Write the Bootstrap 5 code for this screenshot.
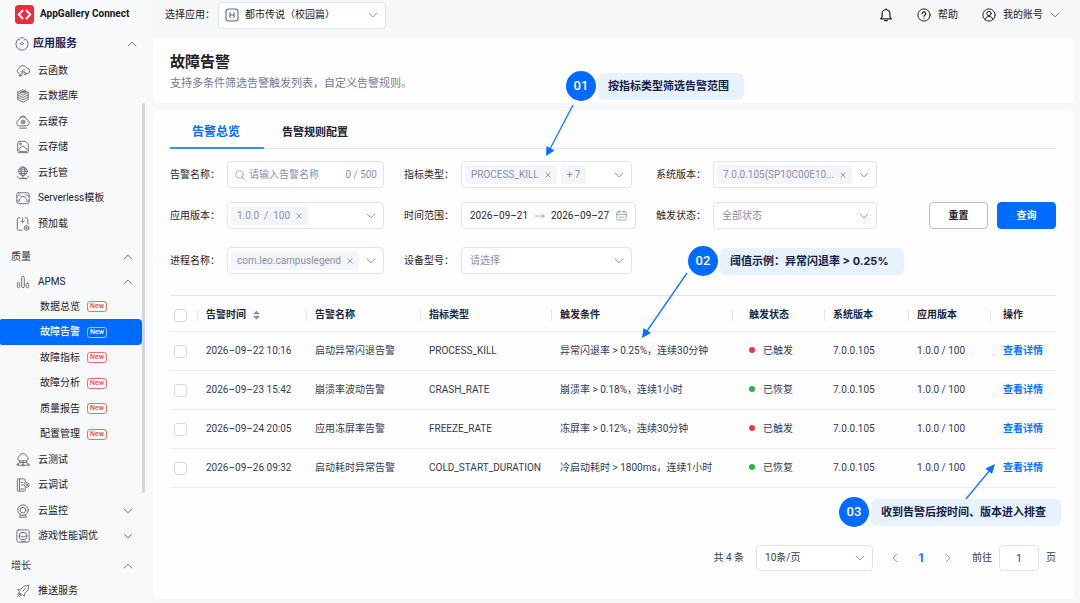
<!DOCTYPE html>
<html lang="zh-CN">
<head>
<meta charset="utf-8">
<meta name="viewport" content="width=device-width, initial-scale=1">
<title>故障告警 - AppGallery Connect</title>
<link href="https://cdn.jsdelivr.net/npm/bootstrap@5.3.0/dist/css/bootstrap.min.css" rel="stylesheet">
<style>
:root{--brand:#006cff;--ink:#1d2129;--cell:#333a55;--muted:#8a8fa8;--line:#dfe3ee;
--chev:url("data:image/svg+xml,%3Csvg xmlns='http://www.w3.org/2000/svg' viewBox='0 0 16 16' fill='none' stroke='%238a8fa8' stroke-width='1.6' stroke-linecap='round' stroke-linejoin='round'%3E%3Cpath d='M2 5l6 6 6-6'/%3E%3C/svg%3E")}
body{font-family:Roboto,"Noto Sans CJK SC",sans-serif;font-size:10px;line-height:16px;color:var(--ink);background:#f5f7f8}
svg.ico{width:14px;height:14px;fill:none;stroke:currentColor;stroke-width:1.1;stroke-linecap:round;stroke-linejoin:round;flex:none}
svg.chevron{width:10px;height:10px;stroke-width:1.6;color:#6a6f85}
a{color:inherit;text-decoration:none}
/* sidebar */
.side{width:153px;flex:none;background:#f7f9fa;padding-right:11px}
.brand-row{height:28px;padding-left:15px;gap:6px;font-size:10px;font-weight:700;color:#15171c}
.brand-row svg{width:19px;height:19px;flex:none}
.side ul{list-style:none;margin:0;padding:0}
.side li,.group-head{height:25px;display:flex;align-items:center}
.side li:nth-child(even){height:26px}
.side li>a{flex:1;height:100%;display:flex;align-items:center;gap:8px;padding:0 9px 0 16px}
.side li>a svg.ico:first-child{color:#6d7078}
.side .chevron{margin-left:auto}
.group-head{width:100%;border:0;background:none;padding:0 9px 0 11px;color:#33363d}
.group-head.top-group{height:30px;padding:1px 5px 0 15px;gap:4px;font-size:11px;font-weight:700;color:#1b2559}
.top-group svg.ico:first-child{color:#5d6590}
.side .sub-list a{padding-left:40px;gap:7px}
.side .sub-list a.active{background:var(--brand);color:#fff;border-radius:2px 4px 4px 2px;font-weight:500}
.new-tag{border:1px solid #f56a6e;color:#f3484e;border-radius:3px;font-size:7px;line-height:9px;width:20px;text-align:center;font-weight:500}
.active .new-tag{border-color:#9cc6ff;color:#fff}
.side-scroll{position:absolute;left:142px;top:103px;width:3px;height:390px;border-radius:2px;background:#d3d5da}
/* top bar */
.topbar{height:30px;padding:0 20px 0 12px}
.topbar button{border:0;background:none;padding:0;color:inherit;display:flex;align-items:center;gap:7px}
.app-pick .form-select{width:168px;padding-left:26px;color:var(--ink)}
.app-pick svg{position:absolute;left:7px;top:6px;color:#62667d}
/* panels */
.panel{background:#fefefe;border-radius:5px}
h1{font-size:15px;line-height:22px;font-weight:700;margin:0}
.lead-text{font-size:11px;color:#747a94}
.tab-bar{border-bottom:1px solid var(--line);height:38px}
.tab-bar .nav-link{font-size:11px;font-weight:700;color:var(--ink);padding:4px 18px 0;line-height:35px;border-bottom:2px solid transparent;height:38px}
.tab-bar .nav-link.active{font-size:12px;color:var(--brand);padding:4px 24px 0 22px;border-color:#3b8dff}
/* filters */
.filters{display:grid;grid-template-columns:214fr 232fr 221fr 159fr;column-gap:20px;row-gap:14px;margin-top:12px}
.field{display:flex;align-items:center;position:relative;min-width:0}
.field>label,.field>.caption-text{width:57px;flex:none;color:#24262d}
.ctl,.form-select,.ctl-box{height:27px;border:1px solid var(--line);border-radius:4px;background-color:#fff;font-size:10px;line-height:16px;color:var(--cell)}
.ctl-box{flex:1;min-width:0;display:flex;align-items:center;padding:0 7px 0 3px;color:var(--muted)}
.ctl-box svg.chevron{color:var(--muted)}
.form-select{--bs-form-select-bg-img:var(--chev);padding:0 24px 0 8px;background-size:10px;background-position:right 7px center}
.form-select.empty{color:var(--muted)}
.ctl-box input{border:0;outline:0;background:none;padding:0;min-width:0;color:inherit}
.ctl-box input::placeholder{color:var(--muted)}
.chip{background:#f4f5f8;border-radius:3px;height:19px;display:flex;align-items:center;padding:0 6px;gap:6px;white-space:nowrap}
.chip button,.ctl-box>button{border:0;background:none;padding:0;color:inherit;display:flex}
.chip svg.ico{width:6px;height:6px;stroke-width:2.400}
.btn-act{width:59px;height:27px;border-radius:4px;font-size:10px;font-weight:700;padding:0;line-height:16px}
.btn-reset{border:1px solid #b9bccb;background:#fff;color:var(--ink)}
.btn-query{border:1px solid var(--brand);background:var(--brand);color:#fff}
.btn-query:hover{background:#005be0;color:#fff}
/* table */
.alarms{table-layout:fixed;margin:21px 0 0;border-top:1px solid var(--line);color:var(--cell);--bs-table-bg:transparent;--bs-table-color:var(--cell)}
.alarms>thead>tr>th{height:36px;padding:3px 0 0 9px;font-weight:700;color:#20263d;vertical-align:middle;border-color:#e8ebf3;white-space:nowrap;position:relative}
.alarms>thead>tr>th+th::before{content:"";position:absolute;left:0;top:14px;width:1px;height:11px;background:#e4e7f0}
.alarms>tbody>tr>td{height:39px;padding:0 0 0 9px;vertical-align:middle;border-color:#e8ebf3;white-space:nowrap;position:relative}
.alarms>*>tr>*:first-child{padding-left:4px}
.alarms>*>tr>*:nth-child(6){padding-left:17px}
.alarms>*>tr>*:nth-child(9){padding-left:13px}
.alarms .form-check-input{width:13px;height:13px;margin:0;border:1px solid #d5daea;border-radius:3px;display:block}
.alarms td a{color:#0a75ff;font-weight:700}
.dot-mark{width:6px;height:6px;border-radius:50%;display:inline-block;margin-right:8px;vertical-align:1px}
.is-on{background:#f9333d}.is-off{background:#23b83a}
/* callouts lying over the page */
.tip{position:absolute;display:flex;align-items:center;gap:2px;z-index:5;white-space:nowrap;pointer-events:none}
.tip-no{width:30px;height:30px;border-radius:50%;background:var(--brand);color:#fff;font-size:13px;font-weight:500;display:flex;align-items:center;justify-content:center}
.tip-text{background:#e8f1fe;border-radius:6px;height:27px;line-height:27px;padding:0 15px 0 10px;font-family:Inter,"Noto Sans CJK SC",sans-serif;font-size:11px;font-weight:700;color:#141d45}
.tip-arrow{position:absolute;overflow:visible;stroke:#1a7bff;fill:#0a6fff;stroke-width:1.4}
.tip-arrow .head{stroke:none}
.tip-1{left:162px;top:-90px}.tip-1 .tip-arrow{left:-20px;top:34px}
.tip-2{left:137px;top:-86px}.tip-2 .tip-arrow{left:-46px;top:27px}
.tip-3{right:-5px;top:48px}.tip-3 .tip-arrow{right:66px;top:-33px}
/* pager */
.pager{color:var(--cell);margin-top:57px}
.pager .form-select{width:117px;height:26px}
.pager .ctl{width:40px;height:26px;text-align:center}
.pager button{border:0;background:none;padding:0;color:#8f94aa;display:flex}
.pager svg.chevron{color:#8f94aa}
</style>
</head>
<body>
<svg class="d-none">
 <symbol id="down" viewBox="0 0 16 16"><path d="M2 5l6 6 6-6"/></symbol>
 <symbol id="up" viewBox="0 0 16 16"><path d="M2 11l6-6 6 6"/></symbol>
 <symbol id="left" viewBox="0 0 16 16"><path d="M11 2L5 8l6 6"/></symbol>
 <symbol id="right" viewBox="0 0 16 16"><path d="M5 2l6 6-6 6"/></symbol>
 <symbol id="x" viewBox="0 0 16 16"><path d="M2 2l12 12M14 2L2 14"/></symbol>
</svg>
<div class="d-flex min-vh-100">
 <nav class="side position-relative" aria-label="主导航">
  <div class="brand-row d-flex align-items-center">
   <svg viewBox="0 0 19 19"><rect width="19" height="19" rx="3.5" fill="#ee2b3c"/><path d="M8 5L3.8 9.5 8 14M11 5l4.200 4.500L11 14" fill="none" stroke="#fff" stroke-width="2"/></svg>
   <span>AppGallery Connect</span>
  </div>
  <button class="group-head top-group"><svg class="ico" viewBox="0 0 16 16"><path d="M4 2.300a7 7 0 1 0 8 0M4 2.300l1.500 1.200M12 2.300l-1.500 1.200M6.500 1h3M6 7l2 2 2-2M8 6v1"/></svg>应用服务<svg class="ico chevron"><use href="#up"/></svg></button>
  <ul>
   <li><a href="#"><svg class="ico" viewBox="0 0 16 16"><path d="M3.500 11A3 3 0 0 1 3 5.500 5 5 0 0 1 12.500 5a3 3 0 0 1 .5 6H12M9.500 6.500C7 5.500 7.500 9 7 11.500S5 15 4.500 13M5.500 9h4"/><circle cx="10.500" cy="11" r="1.300"/><circle cx="4.500" cy="13" r="1"/></svg>云函数</a></li>
   <li><a href="#"><svg class="ico" viewBox="0 0 16 16"><path d="M8 1l6 3-6 3-6-3zM2 4v8l6 3 6-3V4M2 6.700l6 3 6-3M2 9.400l6 3 6-3M5 4h6M6 2.800h4"/></svg>云数据库</a></li>
   <li><a href="#"><svg class="ico" viewBox="0 0 16 16"><path d="M4 12.500A3.500 3.500 0 0 1 3.200 5.700 5 5 0 0 1 12.800 5.700 3.500 3.500 0 0 1 12 12.500zM4 15h8M5 2.500L8 1l3 1.500"/><circle cx="8" cy="8" r="2.200"/><circle cx="8" cy="8" r=".5"/></svg>云缓存</a></li>
   <li><a href="#"><svg class="ico" viewBox="0 0 16 16"><path d="M4 1.500h6.500l3.500 3V13a1.500 1.500 0 0 1-1.500 1.500h-9A1.500 1.500 0 0 1 2 13V3.500a2 2 0 0 1 2-2zM4 13a2.300 2.300 0 0 1 1-4 3 3 0 0 1 5.500 0A2.300 2.300 0 0 1 12 13z"/><circle cx="5" cy="4.500" r="1"/></svg>云存储</a></li>
   <li><a href="#"><svg class="ico" viewBox="0 0 16 16"><circle cx="8" cy="6" r="5"/><ellipse cx="8" cy="6" rx="2.200" ry="5"/><path d="M3 6h10M4 3.500h8M4 8.500h8M8 11v3M1.500 12l2 2.500h9l2-2.500M5 14h6"/></svg>云托管</a></li>
   <li><a href="#"><svg class="ico" viewBox="0 0 16 16"><rect x="1" y="2" width="14" height="12.500" rx="2"/><path d="M1 6c2 0 2-1.500 4-1.500M15 6c-2 0-2-1.500-4-1.500M4.500 12a2 2 0 0 1 .3-3.500 3.300 3.300 0 0 1 6.400 0A2 2 0 0 1 11.500 12M1 11l2 1M15 11l-2 1"/></svg>Serverless模板</a></li>
   <li><a href="#"><svg class="ico" viewBox="0 0 16 16"><path d="M4.500 1H3a1.500 1.500 0 0 0-1.500 1.500v11A1.500 1.500 0 0 0 3 15h4M10.500 1H12a1.500 1.500 0 0 1 1.500 1.500V8M7.500 1v5M5.500 4.500l2 2 2-2"/><circle cx="12" cy="12.500" r="2.700"/><path d="M11 12.500h2M12 11.500v2"/></svg>预加载</a></li>
  </ul>
  <button class="group-head mt-2">质量<svg class="ico chevron"><use href="#up"/></svg></button>
  <ul>
   <li><a href="#"><svg class="ico" viewBox="0 0 16 16"><rect x="1.500" y="8.500" width="2.800" height="6" rx="1.400"/><rect x="6.500" y="1.500" width="3" height="13" rx="1.500"/><rect x="11.700" y="9.500" width="2.800" height="5" rx="1.400"/></svg>APMS<svg class="ico chevron"><use href="#up"/></svg></a></li>
  </ul>
  <ul class="sub-list">
   <li><a href="#">数据总览<span class="new-tag">New</span></a></li>
   <li><a href="#" class="active" aria-current="page">故障告警<span class="new-tag">New</span></a></li>
   <li><a href="#">故障指标<span class="new-tag">New</span></a></li>
   <li><a href="#">故障分析<span class="new-tag">New</span></a></li>
   <li><a href="#">质量报告<span class="new-tag">New</span></a></li>
   <li><a href="#">配置管理<span class="new-tag">New</span></a></li>
  </ul>
  <ul>
   <li><a href="#"><svg class="ico" viewBox="0 0 16 16"><path d="M4 9A2.700 2.700 0 0 1 3.500 4 4.700 4.700 0 0 1 12.500 4 2.700 2.700 0 0 1 12 9zM8 9v4M4 9v2l-2 1.500M12 9v2l2 1.500M4 11h8"/><circle cx="2" cy="13.500" r="1"/><circle cx="8" cy="14" r="1"/><circle cx="14" cy="13.500" r="1"/><path d="M4.500 14h2M9.500 14h2"/></svg>云测试</a></li>
   <li><a href="#"><svg class="ico" viewBox="0 0 16 16"><path d="M10.500 5V2a1 1 0 0 0-1-1h-7a1 1 0 0 0-1 1v12a1 1 0 0 0 1 1h7a1 1 0 0 0 1-1v-3M4 1v14M6 5h2M6 8h2M5.500 12.500h3"/><path d="M11 5.500h2.500L15.300 8l-1.800 2.500H11L9.300 8z"/><circle cx="12.300" cy="8" r=".8"/></svg>云调试</a></li>
   <li><a href="#"><svg class="ico" viewBox="0 0 16 16"><circle cx="8" cy="7" r="6"/><circle cx="8" cy="7" r="3.300"/><path d="M5.500 12.500L4 15h8l-1.500-2.500"/></svg>云监控<svg class="ico chevron"><use href="#down"/></svg></a></li>
   <li><a href="#"><svg class="ico" viewBox="0 0 16 16"><rect x="1" y="1" width="14" height="14" rx="2"/><rect x="4" y="4" width="8" height="8" rx="2.500"/><path d="M3 8h2.500l1 1h3l1-1H13M6 14h5"/></svg>游戏性能调优<svg class="ico chevron"><use href="#down"/></svg></a></li>
  </ul>
  <button class="group-head mt-1">增长<svg class="ico chevron"><use href="#up"/></svg></button>
  <ul>
   <li><a href="#"><svg class="ico" viewBox="0 0 16 16"><path d="M14.500 1.500L9 2.500 5.500 6 2 6.500l2 2-1 2 2 .5.500 2 2-1 2 2 .5-3.500L13.500 7zM5 11l-3.500 3.500M3 10.500l-1.500 1.500M5.500 13L4 14.500M8 8l3-3"/></svg>推送服务</a></li>
  </ul>
  <div class="side-scroll"></div>
 </nav>

 <div class="flex-grow-1 d-flex flex-column pb-1" style="min-width:0">
  <header class="topbar d-flex align-items-center">
   <label for="app">选择应用：</label>
   <div class="app-pick position-relative" style="margin-left:3px">
    <select id="app" class="form-select"><option>都市传说（校园篇）</option></select>
    <svg class="ico" viewBox="0 0 14 14"><rect x="1" y="1" width="12" height="12" rx="2.500"/><path d="M5 4.500v5M9 4.500v5M5 7h4"/></svg>
   </div>
   <div class="ms-auto d-flex align-items-center">
    <button aria-label="通知"><svg class="ico" viewBox="0 0 16 16"><path d="M2 12.500h12L12.500 10V6.500a4.500 4.500 0 0 0-9 0V10zM6.500 14.500h3M8 1v1" stroke-width="1.400"/></svg></button>
    <button class="ms-4"><svg class="ico" viewBox="0 0 16 16"><circle cx="8" cy="8" r="7"/><path d="M6 6.300a2 2 0 1 1 2.800 1.900c-.6.300-.8.600-.8 1.300M8 11.500v.2" stroke-width="1.300"/></svg>帮助</button>
    <button class="ms-4"><svg class="ico" viewBox="0 0 16 16"><circle cx="8" cy="8" r="7"/><circle cx="8" cy="6.300" r="2.500"/><path d="M3.500 13.200a4.600 4.600 0 0 1 9 0"/></svg>我的账号<svg class="ico chevron"><use href="#down"/></svg></button>
   </div>
  </header>
  <main class="d-flex flex-column flex-grow-1 gap-2 mt-2" style="margin-right:6px">
   <section class="panel" style="padding:13px 17px 12px">
    <h1>故障告警</h1>
    <div class="lead-text pt-1 pb-0" style="line-height:14px">支持多条件筛选告警触发列表，自定义告警规则。</div>
   </section>
   <section class="panel flex-grow-1" style="padding:0 18px 28px 17px">
    <nav class="tab-bar nav" aria-label="告警页签">
     <a class="nav-link active" href="#">告警总览</a>
     <a class="nav-link" href="#">告警规则配置</a>
    </nav>
    <form class="filters" onsubmit="return false">
     <div class="field"><label for="nm">告警名称：</label>
      <div class="ctl-box gap-1" style="padding:0 6px 0 7px"><svg class="ico" viewBox="0 0 16 16" style="width:10px;height:10px"><circle cx="7" cy="7" r="6"/><path d="M11.500 11.500L15 15"/></svg><input id="nm" class="flex-grow-1" type="text" placeholder="请输入告警名称" size="8"><span class="text-nowrap">0 / 500</span></div></div>
     <div class="field pe-1"><span class="caption-text">指标类型：</span>
      <div class="ctl-box gap-1"><span class="chip">PROCESS_KILL<button type="button" aria-label="移除"><svg class="ico"><use href="#x"/></svg></button></span><span class="chip">+ 7</span><button type="button" class="ms-auto" aria-label="展开"><svg class="ico chevron"><use href="#down"/></svg></button></div>
      <div class="tip tip-1"><span class="tip-no">01</span><span class="tip-text">按指标类型筛选告警范围</span>
       <svg class="tip-arrow" width="27" height="51"><path d="M27 0L4 44"/><path class="head" d="M0 51l.5-10 8 4.500z"/></svg></div></div>
     <div class="field"><span class="caption-text">系统版本：</span>
      <div class="ctl-box"><span class="chip">7.0.0.105(SP10C00E10...<button type="button" aria-label="移除"><svg class="ico"><use href="#x"/></svg></button></span><button type="button" class="ms-auto" aria-label="展开"><svg class="ico chevron"><use href="#down"/></svg></button></div></div>
     <div></div>
     <div class="field"><span class="caption-text">应用版本：</span>
      <div class="ctl-box"><span class="chip">1.0.0&nbsp; /&nbsp; 100<button type="button" aria-label="移除"><svg class="ico"><use href="#x"/></svg></button></span><button type="button" class="ms-auto" aria-label="展开"><svg class="ico chevron"><use href="#down"/></svg></button></div></div>
     <div class="field"><label for="d1">时间范围：</label>
      <div class="ctl-box px-2 justify-content-between"><input id="d1" style="width:59px;color:#24262d" value="2026–09–21"><svg class="ico" viewBox="0 0 16 16" style="width:10px"><path d="M0 8h15M11 5l4 3-4 3"/></svg><input aria-label="结束日期" style="width:59px;color:#24262d" value="2026–09–27"><svg class="ico" viewBox="0 0 16 16" style="width:11px;height:11px"><rect x="1" y="2.500" width="14" height="12" rx="2"/><path d="M1 6.500h14M4.500 1v3M11.500 1v3M4 10.500h8"/></svg></div></div>
     <div class="field"><label for="st">触发状态：</label><select id="st" class="form-select empty"><option>全部状态</option></select></div>
     <div class="d-flex justify-content-end" style="gap:9px"><button type="reset" class="btn btn-act btn-reset">重置</button><button class="btn btn-act btn-query">查询</button></div>
     <div class="field mt-1"><span class="caption-text">进程名称：</span>
      <div class="ctl-box"><span class="chip">com.leo.campuslegend<button type="button" aria-label="移除"><svg class="ico"><use href="#x"/></svg></button></span><button type="button" class="ms-auto" aria-label="展开"><svg class="ico chevron"><use href="#down"/></svg></button></div></div>
     <div class="field mt-1 pe-1"><label for="dv">设备型号：</label><select id="dv" class="form-select empty"><option>请选择</option></select></div>
    </form>
    <table class="table alarms">
     <colgroup><col style="width:27px"><col style="width:109px"><col style="width:114px"><col style="width:131px"><col style="width:181px"><col style="width:92px"><col style="width:84px"><col style="width:82px"><col style="width:66px"></colgroup>
     <thead><tr><th><input class="form-check-input" type="checkbox" aria-label="全选"></th><th>告警时间 <svg width="7" height="10" viewBox="0 0 8 10" fill="#858ba5" class="ms-1"><path d="M4 0l4 4H0zM0 6h8l-4 4z"/></svg></th><th>告警名称</th><th>指标类型</th><th>触发条件</th><th>触发状态</th><th>系统版本</th><th>应用版本</th><th>操作</th></tr></thead>
     <tbody>
      <tr><td><input class="form-check-input" type="checkbox" aria-label="选择"></td><td>2026–09–22 10:16</td><td>启动异常闪退告警</td><td>PROCESS_KILL</td><td>异常闪退率 &gt; 0.25%，连续30分钟
       <div class="tip tip-2"><span class="tip-no">02</span><span class="tip-text">阈值示例：异常闪退率 &gt; 0.25%</span><svg class="tip-arrow" width="45" height="65"><path d="M45 0L5 58"/><path class="head" d="M0 65l1.500-10 7.500 5z"/></svg></div></td><td><span class="dot-mark is-on"></span>已触发</td><td>7.0.0.105</td><td>1.0.0 / 100</td><td><a href="#">查看详情</a></td></tr>
      <tr><td><input class="form-check-input" type="checkbox" aria-label="选择"></td><td>2026–09–23 15:42</td><td>崩溃率波动告警</td><td>CRASH_RATE</td><td>崩溃率 &gt; 0.18%，连续1小时</td><td><span class="dot-mark is-off"></span>已恢复</td><td>7.0.0.105</td><td>1.0.0 / 100</td><td><a href="#">查看详情</a></td></tr>
      <tr><td><input class="form-check-input" type="checkbox" aria-label="选择"></td><td>2026–09–24 20:05</td><td>应用冻屏率告警</td><td>FREEZE_RATE</td><td>冻屏率 &gt; 0.12%，连续30分钟</td><td><span class="dot-mark is-on"></span>已触发</td><td>7.0.0.105</td><td>1.0.0 / 100</td><td><a href="#">查看详情</a></td></tr>
      <tr><td><input class="form-check-input" type="checkbox" aria-label="选择"></td><td>2026–09–26 09:32</td><td>启动耗时异常告警</td><td>COLD_START_DURATION</td><td>冷启动耗时 &gt; 1800ms，连续1小时</td><td><span class="dot-mark is-off"></span>已恢复</td><td>7.0.0.105</td><td>1.0.0 / 100</td><td><a href="#">查看详情</a>
       <div class="tip tip-3"><span class="tip-no">03</span><span class="tip-text">收到告警后按时间、版本进入排查</span><svg class="tip-arrow" width="29" height="35"><path d="M0 35L24 6"/><path class="head" d="M29 0l-3 10-6.500-5.500z"/></svg></div></td></tr>
     </tbody>
    </table>
    <div class="pager d-flex align-items-center justify-content-end">
     <label for="ps">共 4 条</label>
     <select id="ps" class="form-select" style="margin-left:12px"><option>10条/页</option></select>
     <button aria-label="上一页" style="margin-left:17px"><svg class="ico chevron"><use href="#left"/></svg></button>
     <a href="#" style="margin:0 18px;color:#0a75ff;font-weight:700;font-size:12px">1</a>
     <button aria-label="下一页"><svg class="ico chevron"><use href="#right"/></svg></button>
     <label for="pg" style="margin:0 7px 0 19px">前往</label><input id="pg" class="ctl" value="1"><span style="margin-left:7px">页</span>
    </div>
   </section>
  </main>
 </div>
</div>
<script src="https://cdn.jsdelivr.net/npm/bootstrap@5.3.0/dist/js/bootstrap.bundle.min.js"></script>
</body>
</html>
